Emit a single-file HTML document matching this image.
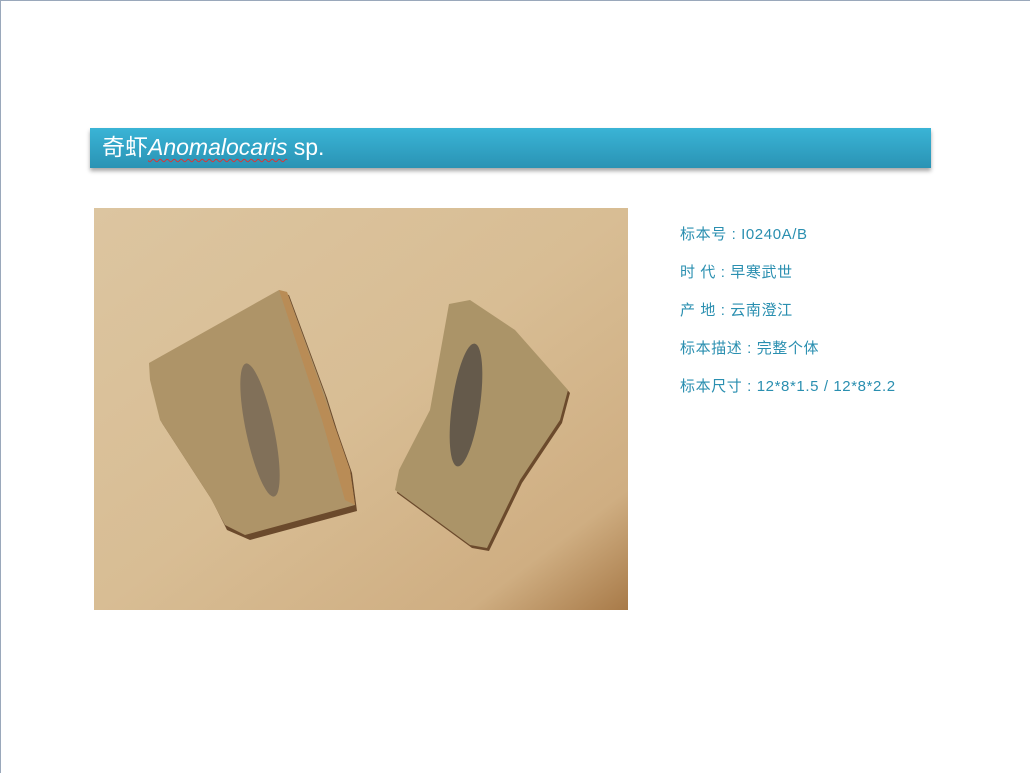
<!DOCTYPE html>
<html><head><meta charset="utf-8"><style>
html,body{margin:0;padding:0}
body{width:1030px;height:773px;background:#fff;position:relative;overflow:hidden;font-family:"Liberation Sans","Noto Sans CJK SC",sans-serif}
.frame{position:absolute;left:0;top:0;width:1029px;height:772px;border-left:1px solid #9aa8bb;border-top:1px solid #9aa8bb}
.bar{position:absolute;left:90px;top:128px;width:841px;height:40px;background:linear-gradient(#3ab4d6,#2a93b4);box-shadow:0 3px 4px rgba(0,0,0,.35)}
.bar span{position:absolute;left:12px;top:5px;color:#fff;font-size:23px;line-height:28px;font-family:"Liberation Sans","Noto Sans CJK SC",sans-serif}
.bar i{text-decoration:underline wavy #d33;text-decoration-thickness:1px;text-underline-offset:3px}
.info{position:absolute;left:680px;top:216px;color:#2a8fb0;font-size:15px;line-height:38px;letter-spacing:0.6px}
.pic{position:absolute;left:94px;top:208px}
</style></head><body>
<div class="frame"></div>
<div class="bar"><span>奇虾<i>Anomalocaris</i> sp.</span></div>
<svg class="pic" width="534" height="402" viewBox="94 208 534 402">
<defs><linearGradient id="bg" x1="0" y1="0" x2="1" y2="1"><stop offset="0" stop-color="#dcc5a0"/><stop offset=".5" stop-color="#d8bd94"/><stop offset=".85" stop-color="#cfae82"/><stop offset="1" stop-color="#a87a48"/></linearGradient></defs>
<rect x="94" y="208" width="534" height="402" fill="url(#bg)"/>
<polygon points="149,363 279,290 287,292 325,395 335,427 350,470 355,508 248,537 225,527 210,497 160,420 150,380" fill="#6b4a2c" transform="translate(2,3)"/>
<polygon points="149,363 279,290 287,292 325,395 335,427 350,470 355,505 245,535 225,525 210,497 160,420 150,380" fill="#ae9468"/>
<polygon points="279,290 287,292 335,427 350,470 355,505 345,500 322,420" fill="#b98c56"/>
<polygon points="449,304 470,300 515,330 568,390 560,420 520,480 487,548 470,545 395,490 399,470 430,410" fill="#6b4a2c" transform="translate(2,3)"/>
<polygon points="449,304 470,300 515,330 568,390 560,420 520,480 487,548 470,545 395,490 399,470 430,410" fill="#ab9468"/>
<ellipse cx="260" cy="430" rx="14" ry="68" transform="rotate(-12 260 430)" fill="#6e6152" opacity=".7"/>
<ellipse cx="466" cy="405" rx="14" ry="62" transform="rotate(8 466 405)" fill="#544b44" opacity=".8"/>
</svg>
<div class="info">标本号 : I0240A/B<br>时 代 : 早寒武世<br>产 地 : 云南澄江<br>标本描述 : 完整个体<br>标本尺寸 : 12*8*1.5 / 12*8*2.2</div>
</body></html>
